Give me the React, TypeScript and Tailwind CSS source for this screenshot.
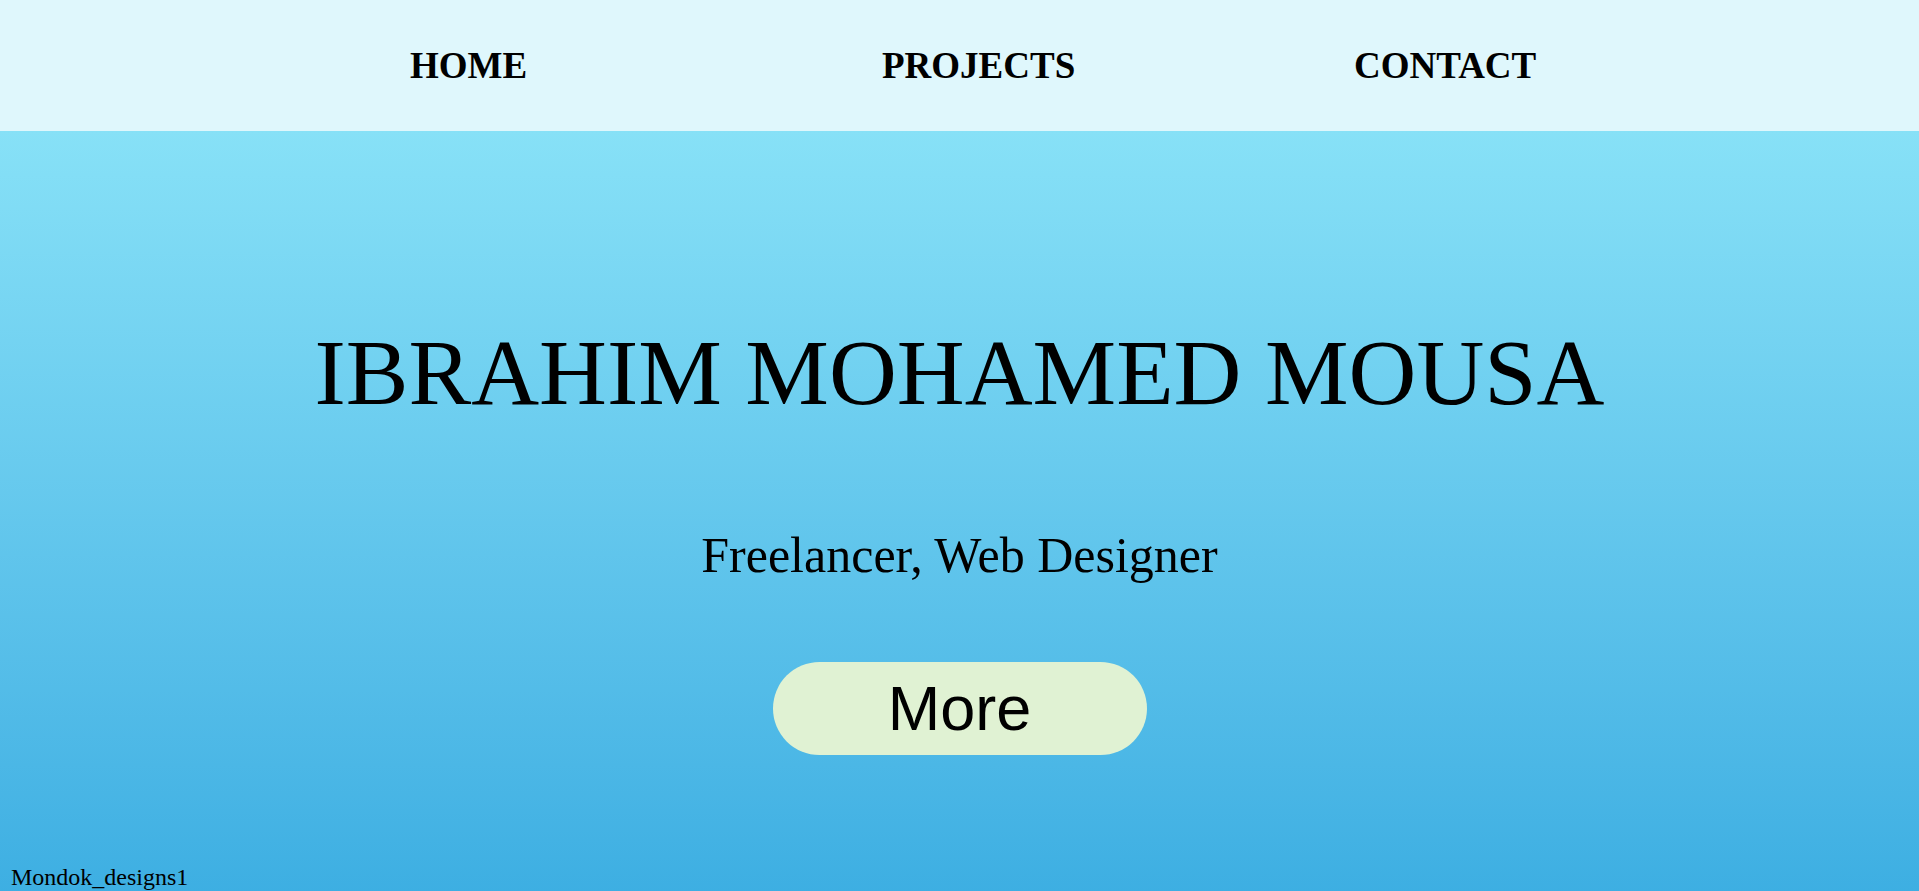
import React from 'react';

const navLinks = ['HOME', 'PROJECTS', 'CONTACT'];

export default function App() {
  return (
    <div className="w-full font-['Liberation_Serif','Times_New_Roman',serif] text-black">
      {/* Top navigation */}
      <nav className="h-[131px] bg-[#dff7fc] flex items-center pl-[410px]">
        {navLinks.map((link) => (
          <a key={link} href="#" className="w-[472px] text-[37px] font-bold leading-none">
            {link}
          </a>
        ))}
      </nav>

      {/* Hero */}
      <section className="h-[770px] bg-gradient-to-b from-[#87e1f7] to-[#3caee2] flex flex-col items-center pt-[194px]">
        <h1 className="text-[94px] leading-none font-normal whitespace-nowrap">IBRAHIM MOHAMED MOUSA</h1>
        <p className="mt-[111px] text-[50px] leading-none">Freelancer, Web Designer</p>
        <button className="mt-[82px] w-[374px] h-[93px] rounded-full bg-[#e0f2d3] flex items-center justify-center font-['Liberation_Sans',Arial,sans-serif] text-[63px]">
          More
        </button>
        <div className="mt-[110px] self-start pl-[11px] text-[24px] leading-none">Mondok_designs1</div>
      </section>
    </div>
  );
}
